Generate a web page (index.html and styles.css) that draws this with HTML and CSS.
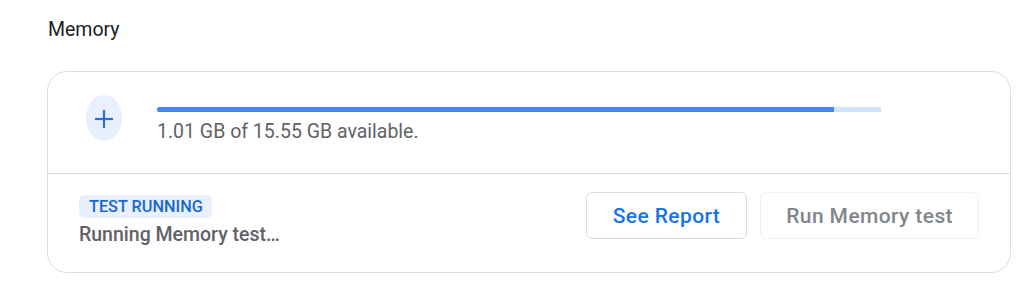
FILE: index.html
```html
<!DOCTYPE html>
<html lang="en">
<head>
<meta charset="utf-8">
<title>Memory</title>
<link rel="stylesheet" href="styles.css">
</head>
<body>
<h2 class="title">Memory</h2>
<section class="card">
  <div class="card-top">
    <div class="icon-circle">
      <svg class="plus" width="18" height="20" viewBox="0 0 18 20" aria-hidden="true">
        <line x1="9" y1="1" x2="9" y2="19" stroke="#2b6fd8" stroke-width="2.2"/>
        <line x1="0" y1="10" x2="18" y2="10" stroke="#2b6fd8" stroke-width="2.2"/>
      </svg>
    </div>
    <div class="usage">
      <div class="bar"><div class="bar-fill" style="width:93.5%"></div></div>
      <div class="usage-text">1.01 GB of 15.55 GB available.</div>
    </div>
  </div>
  <div class="card-bottom">
    <div class="status">
      <span class="badge">TEST RUNNING</span>
      <div class="status-text">Running Memory test…</div>
    </div>
    <div class="actions">
      <button class="btn btn-primary">See Report</button>
      <button class="btn btn-disabled">Run Memory test</button>
    </div>
  </div>
</section>
</body>
</html>
```

FILE: styles.css
```css
* { box-sizing: border-box; }
html, body {
  margin: 0;
  padding: 0;
  background: #ffffff;
  font-family: Roboto, "Liberation Sans", Arial, sans-serif;
}
.title {
  margin: 18px 0 0 48px;
  font-size: 19.5px;
  line-height: 24px;
  font-weight: 400;
  color: #202124;
}
.card {
  margin: 29px 0 0 47px;
  width: 964px;
  height: 202px;
  border: 1px solid #dadce0;
  border-radius: 20px;
  display: flex;
  flex-direction: column;
}
.card-top {
  height: 102px;
  border-bottom: 1px solid #dadce0;
  display: flex;
  align-items: flex-start;
  padding-left: 38px;
}
.icon-circle {
  margin-top: 23px;
  width: 36px;
  height: 46px;
  border-radius: 50%;
  background: #e8f0fe;
  display: flex;
  align-items: center;
  justify-content: center;
}
.plus { display: block; margin-top: 2px; }
.usage {
  margin-left: 35px;
  margin-top: 35px;
}
.bar {
  width: 724px;
  height: 5px;
  background: #d2e3fc;
}
.bar-fill {
  height: 100%;
  background: #4285f4;
  border-radius: 3px 0 0 3px;
}
.usage-text {
  margin-top: 9px;
  font-size: 19.5px;
  line-height: 22px;
  color: #5f6368;
}
.card-bottom {
  flex: 1;
  display: flex;
  justify-content: space-between;
  align-items: flex-start;
  padding: 0 31px;
}
.status {
  margin-top: 21px;
  display: flex;
  flex-direction: column;
  align-items: flex-start;
}
.badge {
  display: inline-block;
  height: 23px;
  line-height: 23px;
  padding: 0 9px 0 10px;
  border-radius: 5px;
  background: #e8f0fe;
  color: #1967d2;
  font-size: 16.3px;
  font-weight: 500;
}
.status-text {
  margin-top: 5px;
  font-size: 19.5px;
  line-height: 24px;
  font-weight: 500;
  color: #5f6368;
}
.actions {
  margin-top: 18px;
  display: flex;
  gap: 13px;
}
.btn {
  height: 47px;
  padding: 0 25px;
  border-radius: 6px;
  background: #ffffff;
  font-family: Roboto, "Liberation Sans", Arial, sans-serif;
  font-size: 21px;
  font-weight: 500;
  letter-spacing: 0.4px;
  cursor: pointer;
}
.btn-primary {
  padding: 0 26px;
  border: 1px solid #dadce0;
  color: #1a73e8;
}
.btn-disabled {
  border: 1px solid #eef0f2;
  color: #80868b;
}
```
